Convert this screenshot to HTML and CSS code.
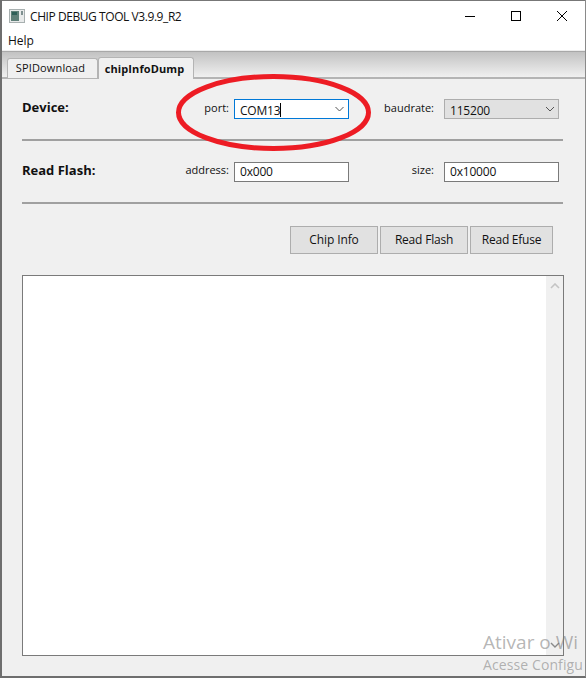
FILE: index.html
```html
<!DOCTYPE html>
<html lang="en">
<head>
<meta charset="utf-8">
<title>CHIP DEBUG TOOL</title>
<link rel="stylesheet" href="styles.css">
</head>
<body>
<div class="window">
  <header class="titlebar">
    <svg class="app-icon" width="16" height="14" viewBox="0 0 16 14"><rect x="0.5" y="0.5" width="15" height="13" fill="#e8eaea" stroke="#a8b0b0"/><rect x="2" y="2" width="8" height="10" fill="#5f7f78"/><rect x="3" y="3" width="5" height="3" fill="#2f5f58"/><rect x="12" y="2" width="2" height="4" fill="#7f9090"/></svg>
    <span class="title">CHIP DEBUG TOOL V3.9.9_R2</span>
    <div class="controls">
      <svg class="ctl" width="46" height="31" viewBox="0 0 46 31"><path d="M18 15.5h10" stroke="#000" fill="none"/></svg>
      <svg class="ctl" width="46" height="31" viewBox="0 0 46 31"><rect x="18.5" y="10.5" width="9" height="9" stroke="#000" fill="none"/></svg>
      <svg class="ctl" width="46" height="31" viewBox="0 0 46 31"><path d="M18 10l10 10M28 10l-10 10" stroke="#000" fill="none"/></svg>
    </div>
  </header>
  <nav class="menubar"><span>Help</span></nav>
  <div class="tabstrip">
    <div class="tab">SPIDownload</div>
    <div class="tab active">chipInfoDump</div>
  </div>
  <main class="pane">
    <section class="row first">
      <h2 class="heading">Device:</h2>
      <label class="field-label port-label">port:</label>
      <div class="combo focused"><span class="value">COM13<i class="caret"></i></span><svg class="chev" width="9" height="6" viewBox="0 0 9 6"><path d="M.5 1l4 4 4-4" stroke="#555" fill="none"/></svg></div>
      <label class="field-label right-label">baudrate:</label>
      <div class="combo readonly"><span class="value">115200</span><svg class="chev" width="10" height="6" viewBox="0 0 10 6"><path d="M1 1l4 4 4-4" stroke="#555" fill="none"/></svg></div>
    </section>
    <hr class="rule">
    <section class="row second">
      <h2 class="heading">Read Flash:</h2>
      <label class="field-label port-label">address:</label>
      <div class="combo"><span class="value">0x000</span></div>
      <label class="field-label right-label">size:</label>
      <div class="combo"><span class="value">0x10000</span></div>
    </section>
    <hr class="rule">
    <div class="actions">
      <button class="btn b1">Chip Info</button>
      <button class="btn b2">Read Flash</button>
      <button class="btn b3">Read Efuse</button>
    </div>
    <div class="log">
      <div class="scroll">
        <svg width="10" height="6" viewBox="0 0 10 6"><path d="M1 5l4-4 4 4" stroke="#c4c4c4" stroke-width="1.6" fill="none"/></svg>
        <svg width="10" height="6" viewBox="0 0 10 6"><path d="M1 1l4 4 4-4" stroke="#8a8a8a" stroke-width="1.4" fill="none"/></svg>
      </div>
    </div>
  </main>
  <svg class="annotation" width="200" height="84" viewBox="0 0 200 84"><ellipse cx="98.5" cy="41.5" rx="95" ry="36" fill="none" stroke="#ed1c24" stroke-width="5"/></svg>
  <div class="watermark"><div class="wm1">Ativar o Wi</div><div class="wm2">Acesse Configu</div></div>
</div>
</body>
</html>
```

FILE: styles.css
```css
* { box-sizing: border-box; }
html, body { margin: 0; padding: 0; }
body { width: 586px; height: 678px; overflow: hidden; font-family: "Open Sans", "Noto Sans", sans-serif; font-size: 12px; color: #111; }
.window { position: relative; width: 586px; height: 678px; background: #f0f0f0; border-left: 2px solid #6e6e6e; border-bottom: 2px solid #6e6e6e; border-right: 1px solid #8a8a8a; overflow: hidden; display: flex; flex-direction: column; }
.titlebar { height: 31px; background: #fff; display: flex; align-items: center; padding-left: 7px; flex: none; border-top: 1px solid #777; }
.app-icon { flex: none; }
.title { margin-left: 5px; font-size: 12px; letter-spacing: -0.43px; white-space: nowrap; }
.controls { margin-left: auto; display: flex; }
.ctl { display: block; }
.menubar { height: 20px; background: #fff; padding-left: 6px; line-height: 19px; flex: none; border-bottom: 1px solid #ededed; }
.tabstrip { height: 27px; flex: none; display: flex; align-items: flex-end; padding-left: 5px; background: linear-gradient(#c2c2c2, #f0f0f0); border-top: 1px solid #a8a8a8; border-bottom: 1px solid #b4b4b4; }
.tab { height: 20px; width: 91px; background: #f0f0f0; border: 1px solid #b4b4b4; border-bottom: none; border-radius: 3px 3px 0 0; text-align: center; line-height: 18px; font-size: 11px; letter-spacing: 0.15px; margin-bottom: -1px; padding-right: 4px; }
.tab.active { height: 22px; width: 96px; font-weight: 700; margin-bottom: -2px; position: relative; line-height: 21px; letter-spacing: 0.1px; padding-right: 3px; }
.pane { flex: 1; padding: 20px 0 0 20px; background: #f0f0f0; display: flex; flex-direction: column; border-top: 1px solid #b4b4b4; }
.row { display: flex; align-items: center; height: 20px; }
.heading { margin: 0; font-size: 13px; font-weight: 700; width: 143px; line-height: 16px; position: relative; top: -2px; }
.field-label { font-size: 11px; width: 69px; text-align: right; padding-right: 5px; flex: none; position: relative; top: -2px; }
.right-label { width: 95px; padding-right: 10px; }
.second .field-label { top: -3px; }
.combo { width: 115px; height: 20px; flex: none; background: #fff; border: 1px solid #7a7a7a; display: flex; align-items: center; justify-content: space-between; padding: 0 4px 0 5px; font-size: 12px; }
.combo.focused { border-color: #0078d7; }
.combo.readonly { background: #e1e1e1; border-color: #adadad; padding-right: 3px; }
.value { display: inline-flex; align-items: center; font-size: 12px; letter-spacing: -0.2px; position: relative; top: 1px; }
.second .value { top: -1px; }
.caret { display: inline-block; width: 1px; height: 14px; background: #000; }
.chev { flex: none; }
.rule { margin: 20px 0 0 0; width: 541px; height: 2px; border: none; background: #a0a0a0; flex: none; }
.second { margin-top: 21px; }
.actions { display: flex; gap: 2px; margin-top: 22px; padding-left: 268px; flex: none; }
.btn { height: 28px; width: 88px; background: #e1e1e1; border: 1px solid #adadad; font: 12px "Open Sans", "Noto Sans", sans-serif; color: #111; padding: 0 0 2px; letter-spacing: -0.1px; }
.b2 { letter-spacing: -0.2px; }
.b3 { width: 83px; letter-spacing: -0.25px; }
.log { margin-top: 21px; width: 542px; height: 381px; background: #fff; border: 1px solid #7a7a7a; flex: none; display: flex; justify-content: flex-end; }
.scroll { width: 17px; background: #f0f0f0; display: flex; flex-direction: column; justify-content: space-between; align-items: center; padding: 7px 0 7px; }
.annotation { position: absolute; left: 173px; top: 71px; }
.watermark { position: absolute; left: 481px; top: 629px; white-space: nowrap; color: rgba(120,120,120,0.55); pointer-events: none; }
.wm1 { font-size: 19px; line-height: 26px; }
.wm2 { font-size: 14px; line-height: 20px; letter-spacing: 0.1px; }
```
